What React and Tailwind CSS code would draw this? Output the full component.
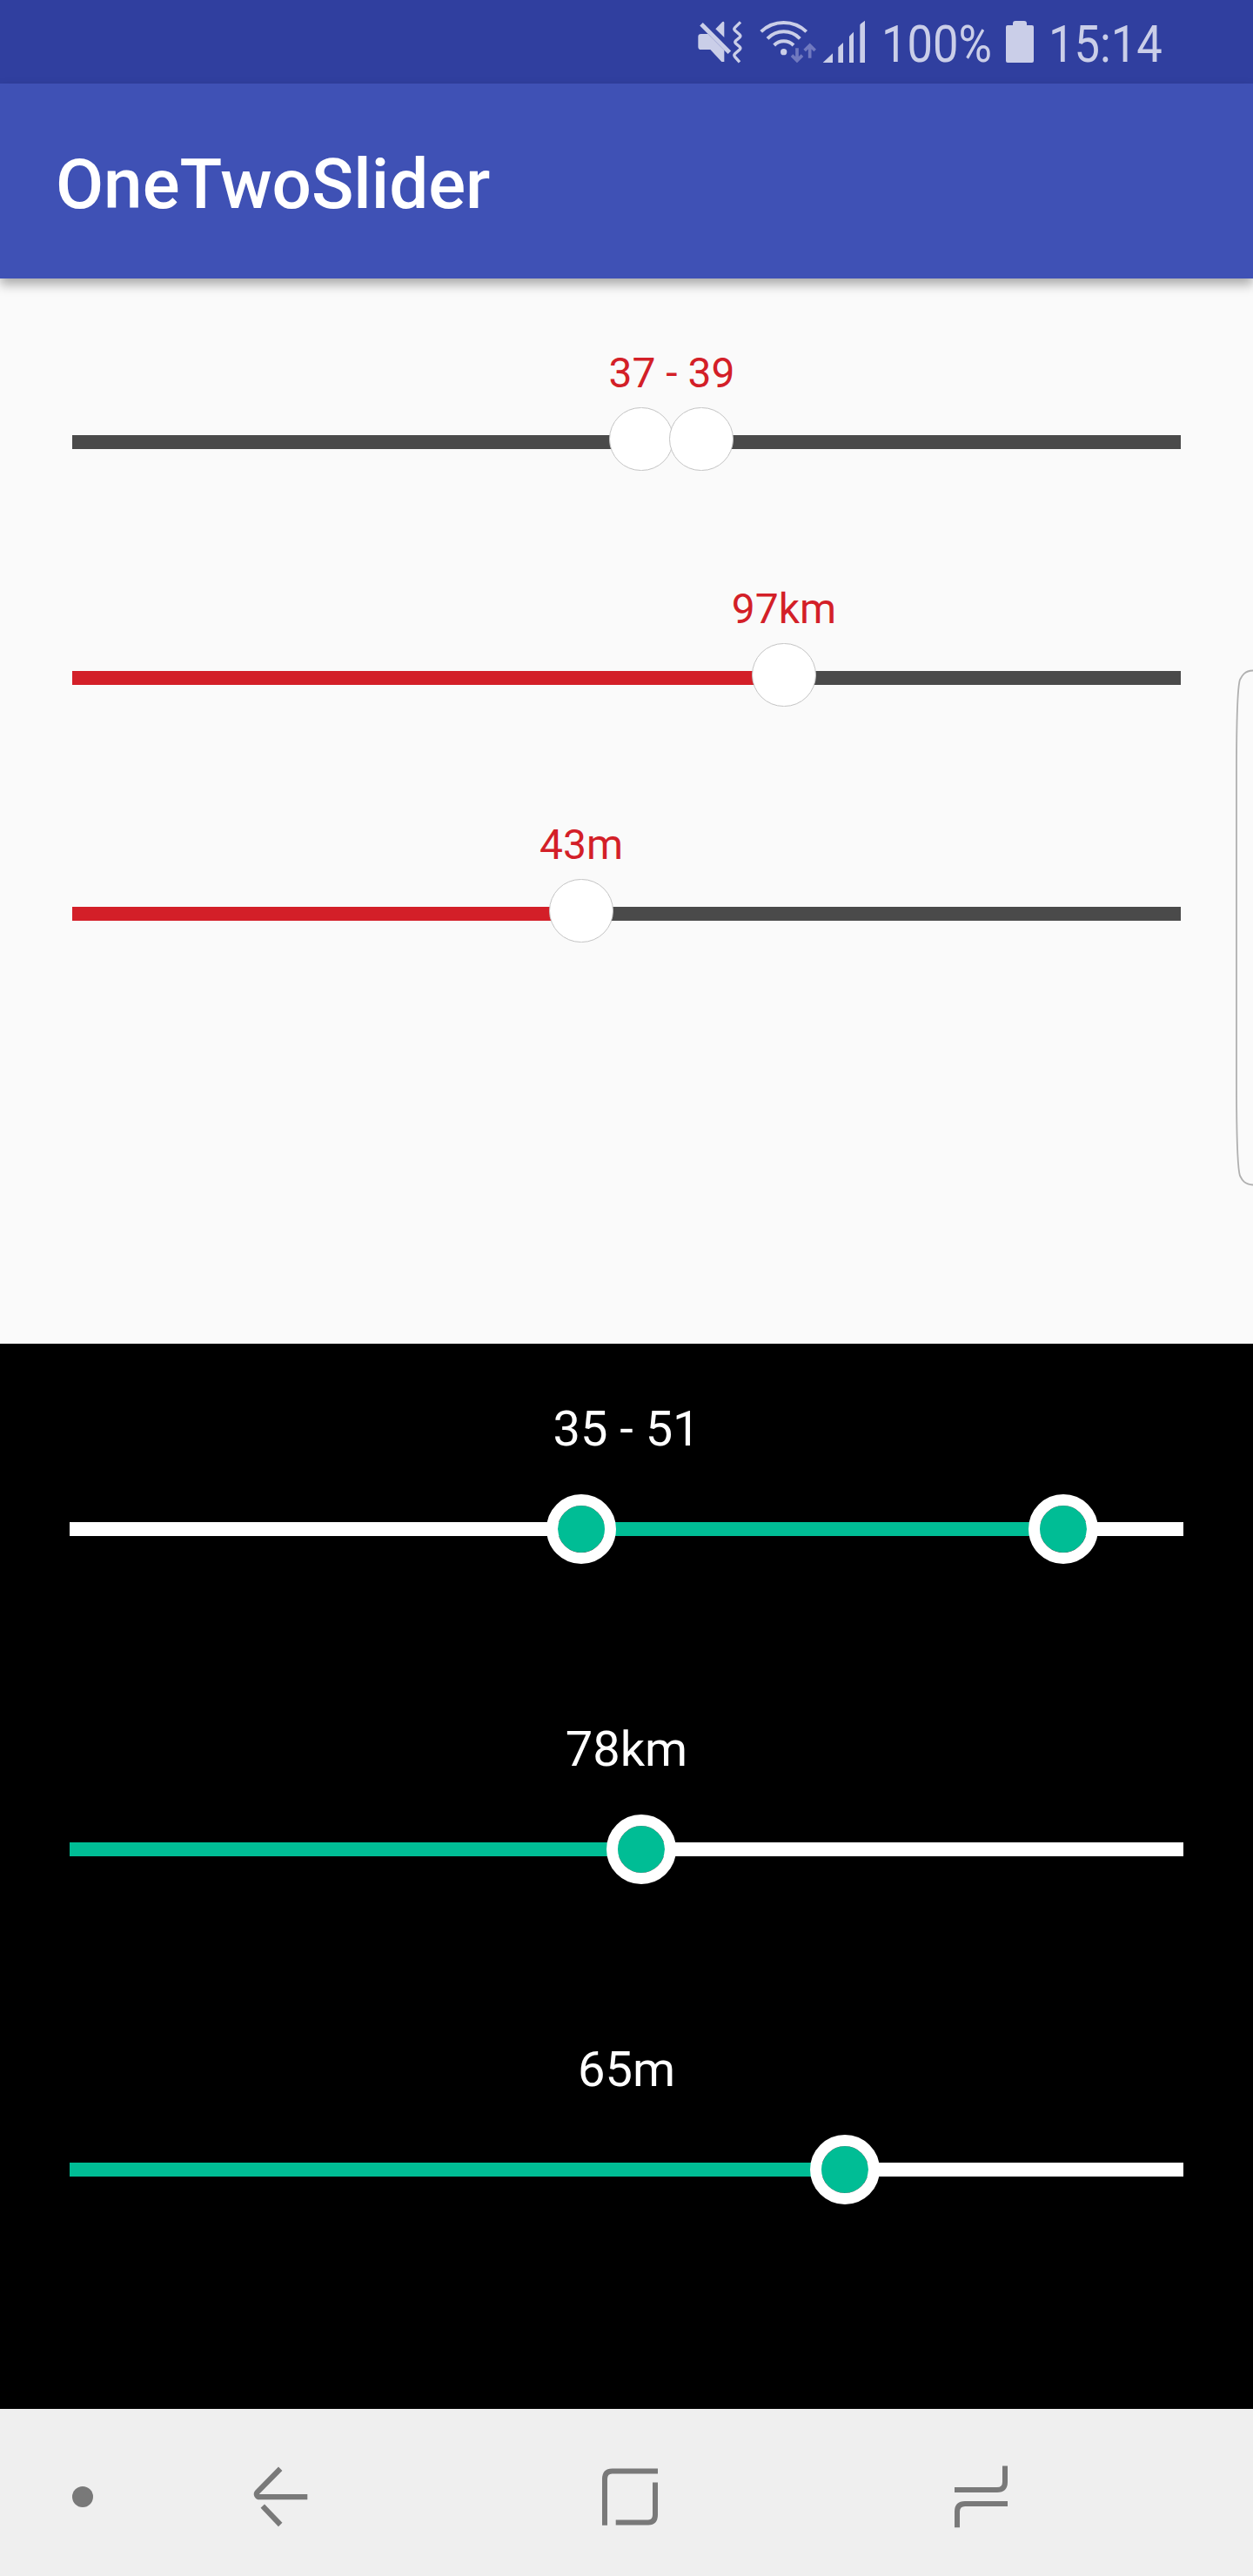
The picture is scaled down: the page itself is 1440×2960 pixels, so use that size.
import React from "react";

function MuteVibrateIcon() {
  return (
    <svg className="h-24 w-[54px]" viewBox="60 0 162 288" fill="#cacee8">
      <path d="M74 117H98L154 173V213H145L106 171H74Q64 171 64 161V127Q64 117 74 117Z" />
      <path d="M124 100L148 75Q154 72 154 79V129Z" />
      <path d="M75 83L172 181" stroke="#cacee8" strokeWidth="15" />
      <path
        d="M210 76L191 95Q186 100 191 105L207 119Q212 124 207 129L194 140Q189 145 194 150L207 161Q212 166 207 171L191 185Q186 190 191 196L207 214"
        fill="none"
        stroke="#cacee8"
        strokeWidth="10"
      />
    </svg>
  );
}

function WifiIcon() {
  return (
    <svg className="ml-4 h-24 w-[68px]" viewBox="270 0 204 288" fill="none">
      <g stroke="#cacee8" strokeWidth="12">
        <path d="M281 109Q314 78 359 78T437 109" />
        <path d="M303 133Q327 109 359 109T415 133" />
        <path d="M326 156Q340 142 359 142T393 156" />
      </g>
      <circle cx="359" cy="179" r="11" fill="#cacee8" />
      <g stroke="#7079bf" strokeWidth="11">
        <path d="M405 166V206M387 191L405 209L423 191" />
        <path d="M449 200V160M431 174L449 156L467 174" />
      </g>
    </svg>
  );
}

function SignalIcon() {
  return (
    <svg className="ml-1 h-24 w-[54px]" viewBox="486 0 162 288" fill="#cacee8">
      <path d="M494 216L528 184V216Z" />
      <path d="M547 216V163L564 147V216Z" />
      <path d="M585 216V125L600 110V216Z" />
      <path d="M622 216V87Q622 84 625 82L639 71V216Z" />
    </svg>
  );
}

function BatteryIcon() {
  return (
    <svg className="ml-3 h-24 w-[38px]" viewBox="0 0 38 96" fill="#cacee8">
      <path d="M5 29H11V27Q11 24 14 24H24Q27 24 27 27V29H33Q35 29 35 31V70Q35 72 33 72H5Q3 72 3 70V31Q3 29 5 29Z" />
    </svg>
  );
}

function StatusBar() {
  return (
    <div className="flex h-24 items-center justify-end bg-[#303f9f] pr-[95px] text-[60px] leading-[70px] text-[#cacee8]">
      <MuteVibrateIcon />
      <WifiIcon />
      <SignalIcon />
      <span className="mt-[5px] ml-4 w-32 origin-left scale-x-[0.875] whitespace-nowrap">100%</span>
      <BatteryIcon />
      <span className="mt-[5px] ml-[14px] w-[140px] origin-left scale-x-[0.875] whitespace-nowrap">15:14</span>
    </div>
  );
}

// Positions are measured in pixels from the start of the track.
function LightSlider({ label, labelAt, thumbs, fill }) {
  return (
    <div className="h-[271px]">
      <div className="relative h-14">
        <span
          className="absolute -translate-x-1/2 whitespace-nowrap text-5xl leading-[56px] text-[#d31f28]"
          style={{ left: labelAt }}
        >
          {label}
        </span>
      </div>
      <div className="relative mt-[43px] h-4 bg-[#4a4a4a]">
        <div className="h-full bg-[#d31f28]" style={{ width: fill }} />
        {thumbs.map((x) => (
          <div
            key={x}
            className="absolute -top-8 h-[73px] w-[74px] rounded-full border border-[#c4c4c4] bg-white"
            style={{ left: x - 37 }}
          />
        ))}
      </div>
    </div>
  );
}

function DarkSlider({ label, thumbs, from, to }) {
  return (
    <div className="h-[368px]">
      <div className="text-center text-[56px] leading-[66px] text-white">{label}</div>
      <div className="relative mt-[74px] h-4 bg-white">
        <div className="h-full bg-[#00bd95]" style={{ marginLeft: from, width: to - from }} />
        {thumbs.map((x) => (
          <div
            key={x}
            className="absolute -top-8 size-20 rounded-full border-[13px] border-white bg-[#00bd95] bg-clip-padding"
            style={{ left: x - 40 }}
          />
        ))}
      </div>
    </div>
  );
}

function NavBar() {
  return (
    <div className="flex h-48 items-center bg-[#efefef]">
      <svg className="ml-[83px] h-48 w-6" viewBox="83 2768 24 192">
        <circle cx="95" cy="2869" r="12" fill="#797979" />
      </svg>
      <svg className="ml-[173px] h-48 w-20" viewBox="280 2768 80 192" fill="none" stroke="#797979" strokeWidth="6.2">
        <path d="M322.2 2836.8L296 2863.3C293.500 2866 295.500 2869.200 298.500 2869.200H353.300" />
        <path d="M301.800 2879.600L322.200 2901" />
      </svg>
      <svg className="ml-[324px] h-48 w-20" viewBox="684 2768 80 192" fill="none" stroke="#797979" strokeWidth="6">
        <path d="M695 2901.700V2848.500Q695 2839.400 703.500 2839.400H756" />
        <path d="M753 2852.500V2889.500Q753 2898.400 745 2898.400H707.700" />
      </svg>
      <svg className="ml-[326px] h-48 w-20" viewBox="1090 2768 80 192" fill="none" stroke="#797979" strokeWidth="6">
        <path d="M1155 2833.500V2852Q1155 2861 1146 2861H1097" />
        <path d="M1100 2904.200V2886Q1100 2877 1109 2877H1158" />
      </svg>
    </div>
  );
}

export default function App() {
  return (
    <div className="relative flex h-[2960px] w-[1440px] flex-col overflow-hidden font-['Roboto',sans-serif]">
      <StatusBar />
      <header className="relative z-10 flex h-56 items-center bg-[#3f51b5] px-16 pt-[7px] shadow-[0_7px_12px_rgba(0,0,0,0.32)]">
        <h1 className="text-[80px] leading-[94px] font-medium text-white">OneTwoSlider</h1>
      </header>
      <section className="h-[1224px] bg-[#fafafa] px-[83px] pt-[81px]">
        <LightSlider label="37 - 39" labelAt={689} thumbs={[654, 723]} fill={0} />
        <LightSlider label="97km" labelAt={818} thumbs={[818]} fill={818} />
        <LightSlider label="43m" labelAt={585} thumbs={[585]} fill={585} />
      </section>
      <section className="h-[1224px] bg-black px-20 pt-[65px]">
        <DarkSlider label="35 - 51" thumbs={[588, 1142]} from={588} to={1142} />
        <DarkSlider label="78km" thumbs={[657]} from={0} to={657} />
        <DarkSlider label="65m" thumbs={[891]} from={0} to={891} />
      </section>
      <NavBar />
      {/* Edge panel handle */}
      <svg
        className="absolute top-[768px] right-0 h-[597px] w-6"
        viewBox="1416 768 24 597"
        fill="none"
        stroke="#b0b0b0"
        strokeWidth="1.8"
      >
        <path d="M1440 770.500C1430 771 1427.500 776 1425 781C1422 790 1421 830 1421 890V1242C1421 1302 1422 1342 1425 1351C1427.500 1356 1430 1361 1440 1361.500" />
      </svg>
    </div>
  );
}
